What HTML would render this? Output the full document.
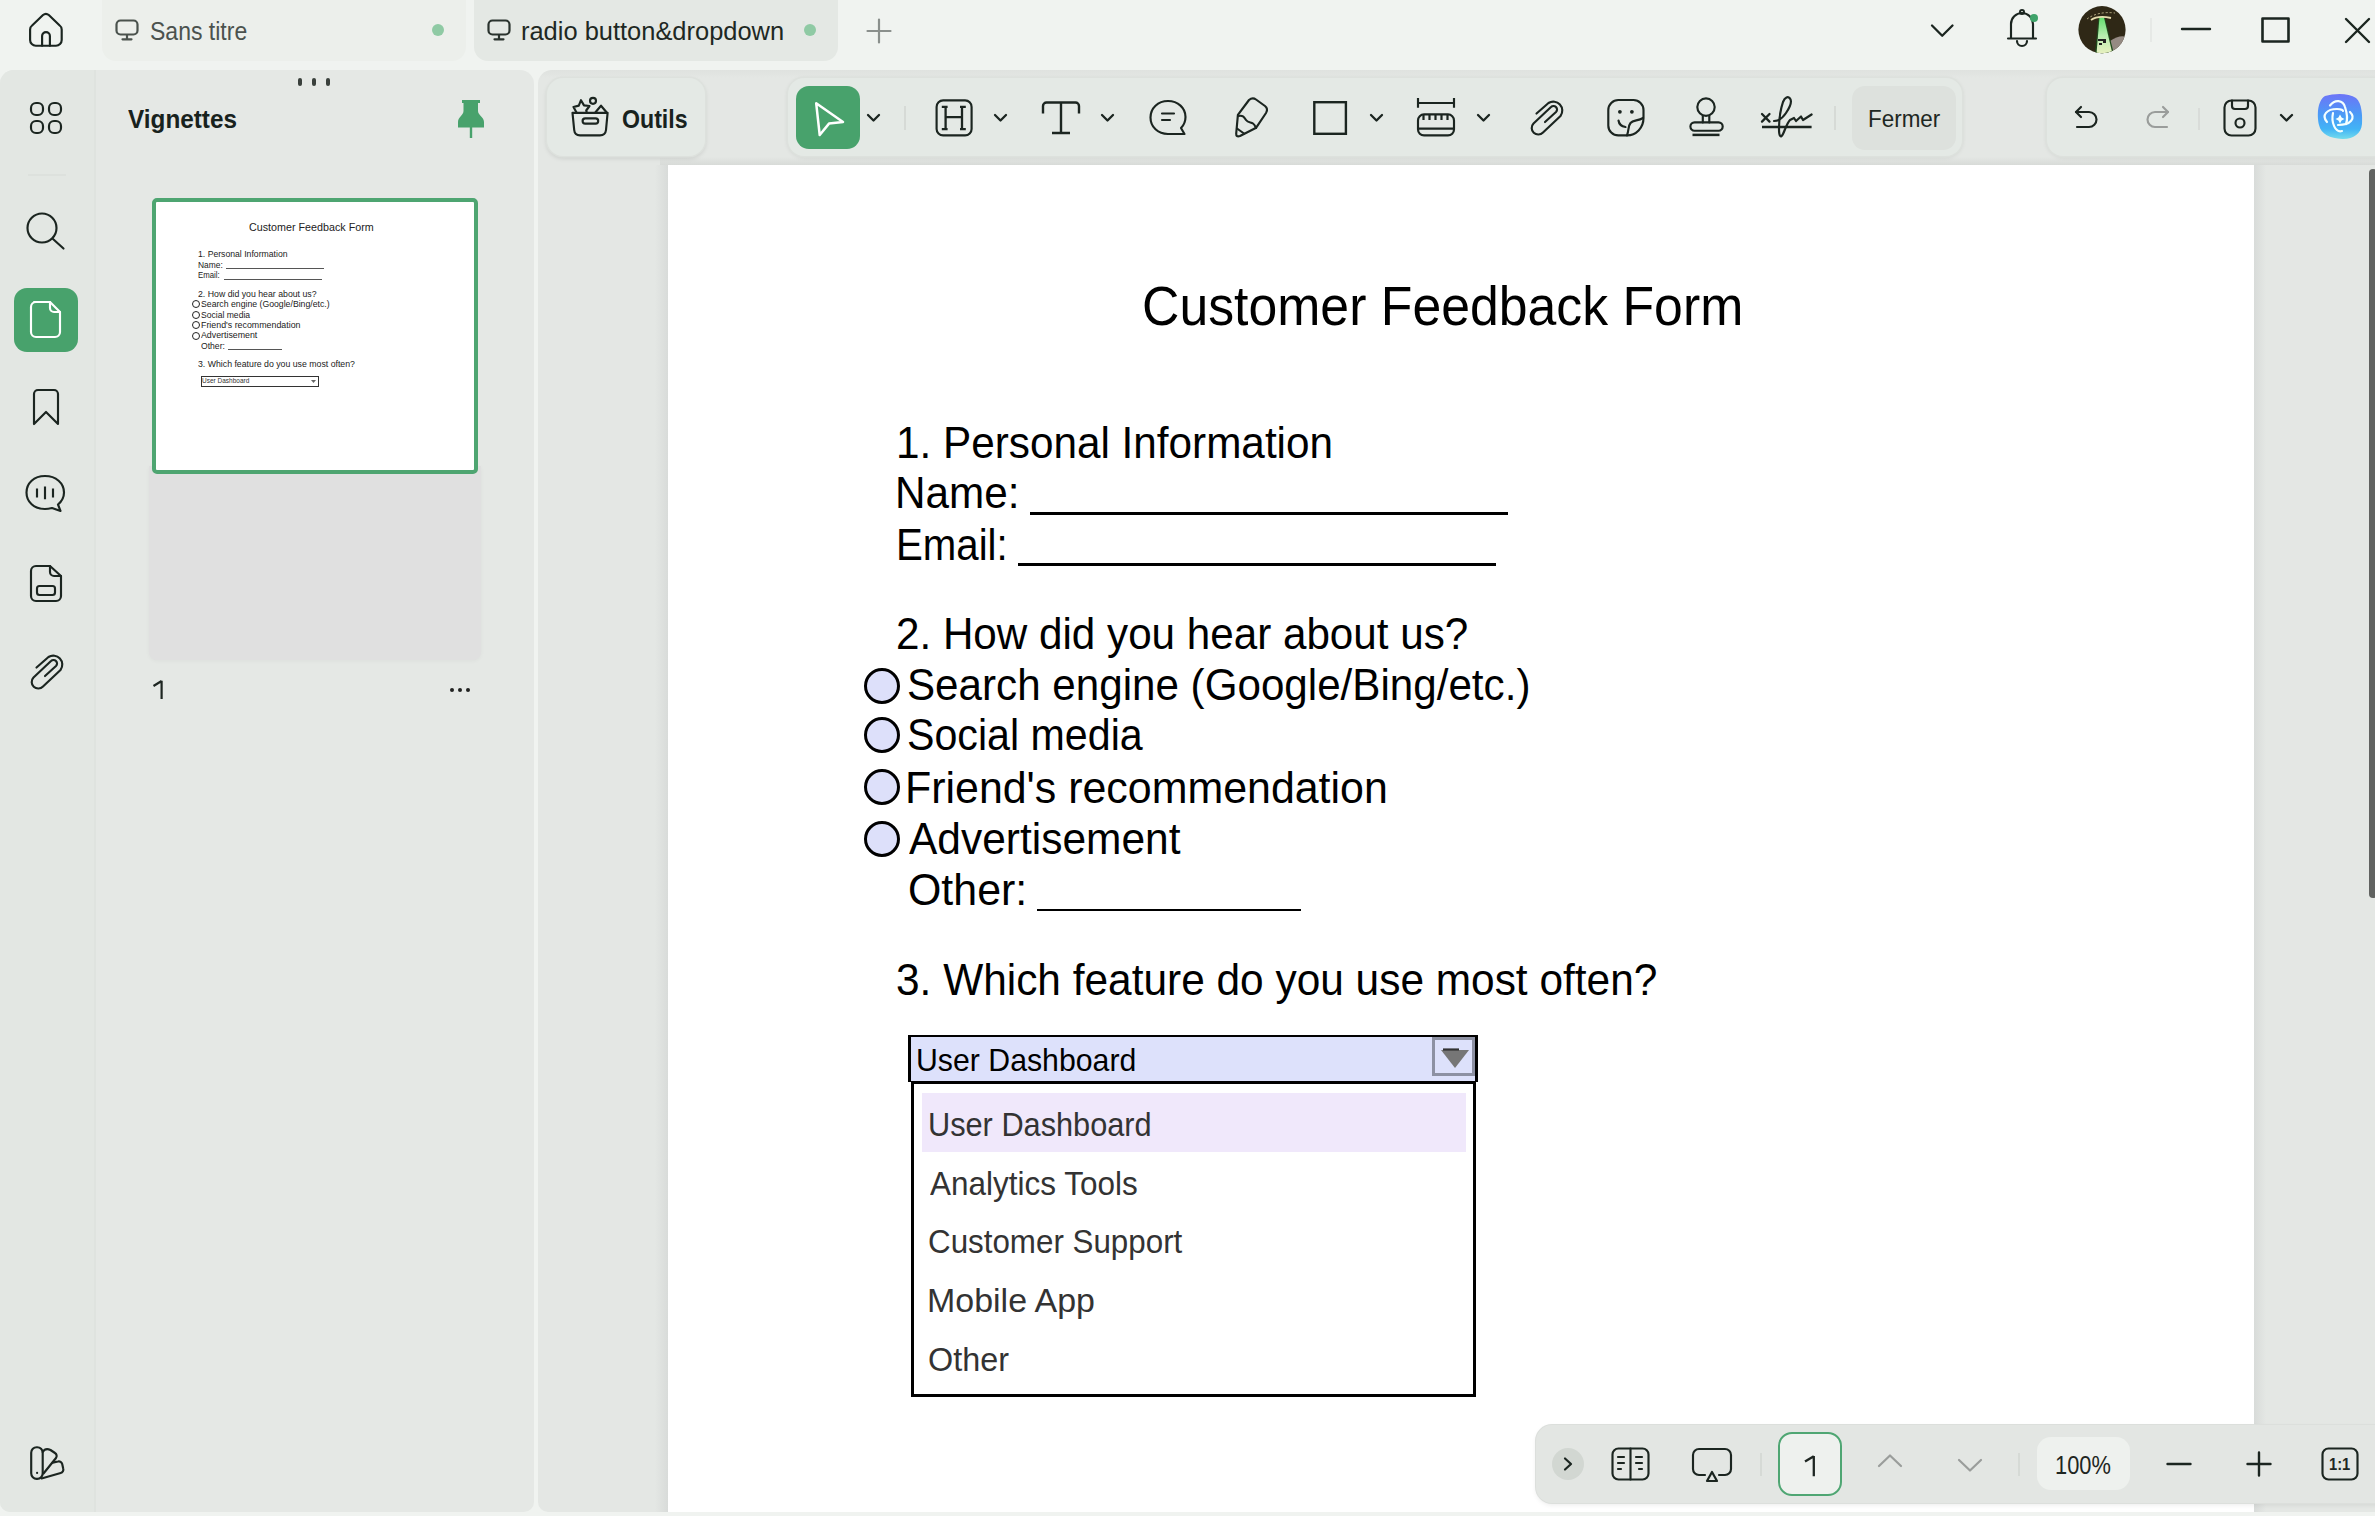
<!DOCTYPE html>
<html><head><meta charset="utf-8"><style>
html,body{margin:0;padding:0;}
body{width:2375px;height:1516px;overflow:hidden;position:relative;background:#f0f3f0;font-family:"Liberation Sans",sans-serif;}
.t{position:absolute;white-space:pre;line-height:1;transform-origin:0 0;}
.b{position:absolute;}
.i{position:absolute;overflow:visible;}
</style></head><body>
<svg class="i" style="left:26px;top:10px;" width="40" height="40" viewBox="0 0 40 40" fill="none" stroke="#1b2520" stroke-width="2.15" stroke-linecap="round" stroke-linejoin="round"><path d="M4.1 19.5 a5 5 0 0 1 2 -4 L17 5 a4.5 4.5 0 0 1 5.8 0 L33.7 15.5 a5 5 0 0 1 2 4 V30 a5.7 5.7 0 0 1 -5.7 5.7 H9.8 a5.7 5.7 0 0 1 -5.7 -5.7 Z"/><path d="M16.1 35.7 V26 a3.9 3.9 0 0 1 7.8 0 V35.7"/></svg><div class="b" style="left:102px;top:-20px;width:364px;height:81px;background:#ecefeb;border-radius:14px;"></div><div class="b" style="left:474px;top:-20px;width:364px;height:81px;background:#e4e8e4;border-radius:14px;"></div><svg class="i" style="left:115px;top:19px;" width="24" height="22" viewBox="0 0 24 22" fill="none" stroke="#1b2520" stroke-width="2.15" stroke-linecap="round" stroke-linejoin="round"><rect x="1.5" y="1.5" width="21" height="14" rx="4" stroke="#4a524d" stroke-width="2.2"/><path d="M12 16 V20 M7.5 20.3 H16.5" stroke="#4a524d" stroke-width="2.2"/></svg><div class="t" style="left:149.66px;top:18.62px;font-size:25.73px;color:#4b524e;font-weight:400;transform:scaleX(0.8949);">Sans titre</div><div class="b" style="left:432px;top:24px;width:12px;height:12px;background:#8fcaa4;border-radius:50%;"></div><svg class="i" style="left:487px;top:19px;" width="24" height="22" viewBox="0 0 24 22" fill="none" stroke="#1b2520" stroke-width="2.15" stroke-linecap="round" stroke-linejoin="round"><rect x="1.5" y="1.5" width="21" height="14" rx="4" stroke="#2a332e" stroke-width="2.2"/><path d="M12 16 V20 M7.5 20.3 H16.5" stroke="#2a332e" stroke-width="2.2"/></svg><div class="t" style="left:521.32px;top:18.91px;font-size:25.50px;color:#1e2823;font-weight:400;transform:scaleX(0.9978);">radio button&amp;dropdown</div><div class="b" style="left:804px;top:24px;width:12px;height:12px;background:#8fcaa4;border-radius:50%;"></div><svg class="i" style="left:866px;top:18px;" width="26" height="26" viewBox="0 0 26 26" fill="none" stroke="#1b2520" stroke-width="2.15" stroke-linecap="round" stroke-linejoin="round"><path d="M13 1.5 V24.5 M1.5 13 H24.5" stroke="#8a8f8c" stroke-width="2.2"/></svg><svg class="i" style="left:1929px;top:22px;" width="26" height="16" viewBox="0 0 26 16" fill="none" stroke="#1b2520" stroke-width="2.15" stroke-linecap="round" stroke-linejoin="round"><path d="M3 3.5 L13.2 13.8 L23.5 3.5" stroke-width="2.3"/></svg><svg class="i" style="left:2005px;top:8px;" width="36" height="42" viewBox="0 0 36 42" fill="none" stroke="#1b2520" stroke-width="2.15" stroke-linecap="round" stroke-linejoin="round"><path d="M6 30 V16 a11 11 0 0 1 22 0 V30"/><path d="M3 30.5 H31" /><path d="M12 33 a5 5 0 0 0 10 0"/><circle cx="17" cy="4" r="2" stroke-width="2"/></svg><div class="b" style="left:2030px;top:14px;width:8px;height:8px;background:#3fa36a;border-radius:50%;"></div><svg class="i" style="left:2078px;top:6px" width="48" height="48" viewBox="0 0 48 48"><defs><clipPath id="av"><circle cx="24" cy="23.7" r="23.6"/></clipPath><linearGradient id="bm" x1="0" y1="0" x2="0" y2="1"><stop offset="0" stop-color="#5fdc6a"/><stop offset="0.5" stop-color="#b6ecae"/><stop offset="1" stop-color="#e9f0c0"/></linearGradient></defs><g clip-path="url(#av)"><rect width="48" height="48" fill="#2f2816"/><path d="M32 35 C38 31 44 29 48 31 V48 H35 Z" fill="#958a83"/><path d="M20.5 10.5 L26.5 10.5 L36 48 L17 48 Z" fill="#1f4a1c"/><path d="M21.5 10.8 L25.8 10.8 L34.5 48 L18.5 48 Z" fill="url(#bm)"/><path d="M13 14 Q20 9 33 12" stroke="#e6dcae" stroke-width="1.8" fill="none"/><path d="M9 13 Q20 5 37 7" stroke="#bdb38a" stroke-width="1" stroke-dasharray="2 2" fill="none"/><path d="M20 34 h8 M21 38 h3 M25 36 h3" stroke="#222" stroke-width="2"/></g></svg><div class="b" style="left:2150px;top:18px;width:2px;height:24px;background:#e6e9e6;"></div><svg class="i" style="left:2180px;top:26px;" width="32" height="6" viewBox="0 0 32 6" fill="none" stroke="#1b2520" stroke-width="2.15" stroke-linecap="round" stroke-linejoin="round"><path d="M2 3 H30" stroke-width="2.4"/></svg><svg class="i" style="left:2260px;top:16px;" width="32" height="28" viewBox="0 0 32 28" fill="none" stroke="#1b2520" stroke-width="2.15" stroke-linecap="round" stroke-linejoin="round"><rect x="2.5" y="2.5" width="26" height="23" stroke-width="2.6"/></svg><svg class="i" style="left:2343px;top:16px;" width="30" height="30" viewBox="0 0 30 30" fill="none" stroke="#1b2520" stroke-width="2.15" stroke-linecap="round" stroke-linejoin="round"><path d="M3 3 L26 26 M26 3 L3 26" stroke-width="2.4"/></svg><div class="b" style="left:0px;top:70px;width:534px;height:1442px;background:#e5e8e5;border-radius:14px 14px 10px 10px;"></div><div class="b" style="left:0px;top:70px;width:95px;height:1442px;background:#e3e7e3;border-radius:14px 0 0 10px;"></div><div class="b" style="left:94px;top:70px;width:2px;height:1442px;background:#dfe3df;"></div><div class="b" style="left:298.2px;top:78px;width:3.6000000000000227px;height:8px;background:#3a403c;border-radius:2px;"></div><div class="b" style="left:312.2px;top:78px;width:3.6000000000000227px;height:8px;background:#3a403c;border-radius:2px;"></div><div class="b" style="left:326.2px;top:78px;width:3.6000000000000227px;height:8px;background:#3a403c;border-radius:2px;"></div><div class="t" style="left:128.15px;top:107.34px;font-size:25.00px;color:#18221d;font-weight:700;transform:scaleX(0.9727);">Vignettes</div><svg class="i" style="left:454px;top:98px;" width="34" height="42" viewBox="0 0 34 42" fill="none" stroke="#1b2520" stroke-width="2.15" stroke-linecap="round" stroke-linejoin="round"><path d="M8 2 H26 V5 H24 V13 C24 17 30 19 30 24 V29.6 H4 V24 C4 19 9.5 17 9.5 13 V5 H8 Z" fill="#48a26c" stroke="none"/><path d="M17 29 V40" stroke="#48a26c" stroke-width="2.4" stroke-linecap="butt"/></svg><svg class="i" style="left:28px;top:100px;" width="36" height="36" viewBox="0 0 36 36" fill="none" stroke="#1b2520" stroke-width="2.15" stroke-linecap="round" stroke-linejoin="round"><rect x="3" y="3" width="12" height="12" rx="5"/><rect x="21" y="3" width="12" height="12" rx="5"/><rect x="3" y="21" width="12" height="12" rx="5"/><rect x="21" y="21" width="12" height="12" rx="5"/></svg><div class="b" style="left:28px;top:174px;width:38px;height:2px;background:#dde1dd;"></div><svg class="i" style="left:25px;top:211px;" width="42" height="40" viewBox="0 0 42 40" fill="none" stroke="#1b2520" stroke-width="2.15" stroke-linecap="round" stroke-linejoin="round"><circle cx="17" cy="17" r="14.5"/><path d="M28 28 L38.5 37.5"/></svg><div class="b" style="left:14px;top:288px;width:64px;height:64px;background:#48a26c;border-radius:13px;"></div><svg class="i" style="left:28px;top:300px;" width="36" height="40" viewBox="0 0 36 40" fill="none" stroke="#1b2520" stroke-width="2.15" stroke-linecap="round" stroke-linejoin="round"><path d="M6 2 H22 L32 12 V32 a5 5 0 0 1 -5 5 H8 a5 5 0 0 1 -5 -5 V7 a5 5 0 0 1 5 -5 Z" stroke="#fff"/><path d="M22 2 V8 a4 4 0 0 0 4 4 H32" stroke="#fff"/></svg><svg class="i" style="left:29px;top:388px;" width="34" height="40" viewBox="0 0 34 40" fill="none" stroke="#1b2520" stroke-width="2.15" stroke-linecap="round" stroke-linejoin="round"><path d="M5 6 a4 4 0 0 1 4 -4 H25 a4 4 0 0 1 4 4 V36 L17 24 L5 36 Z"/></svg><svg class="i" style="left:23px;top:473px;" width="44" height="42" viewBox="0 0 44 42" fill="none" stroke="#1b2520" stroke-width="2.15" stroke-linecap="round" stroke-linejoin="round"><path d="M22 3 C33 3 41 10 41 19.5 C41 25 38 29 35 31.5 L37.5 38 L29 35 C27 35.5 24.5 36 22 36 C11 36 3.5 29 3.5 19.5 C3.5 10 11 3 22 3 Z"/><path d="M14 15.4 V24.5 M22 13.6 V26.3 M30 15.4 V24.5" stroke-linecap="butt"/></svg><svg class="i" style="left:28px;top:564px;" width="36" height="40" viewBox="0 0 36 40" fill="none" stroke="#1b2520" stroke-width="2.15" stroke-linecap="round" stroke-linejoin="round"><path d="M8 2 H22 L33 12 V32 a5 5 0 0 1 -5 5 H8 a5 5 0 0 1 -5 -5 V7 a5 5 0 0 1 5 -5 Z"/><path d="M22 2 V8 a4 4 0 0 0 4 4 H33"/><rect x="9" y="22" width="18" height="9" rx="2.5"/></svg><svg class="i" style="left:20px;top:640px;" width="56" height="60" viewBox="0 0 56 60" fill="none" stroke="#1b2520" stroke-width="2.15" stroke-linecap="round" stroke-linejoin="round"><path d="M16.5 27.5 L28.5 17 A9 9 0 0 1 40.5 30 L23 46.5 A6.5 6.5 0 0 1 13.5 37.5 L31 21 A3.5 3.5 0 0 1 36 26 L25 36"/></svg><svg class="i" style="left:20px;top:1436px;" width="56" height="54" viewBox="0 0 56 54" fill="none" stroke="#1b2520" stroke-width="2.15" stroke-linecap="round" stroke-linejoin="round"><rect x="11.2" y="11.2" width="11.5" height="31.6" rx="5.5"/><path d="M22.7 16 C24.5 13 27.5 12.5 30.5 14 L35 17 a3.5 3.5 0 0 1 1 5 L23.5 37.5"/><path d="M32.7 26.6 L38 25.5 a3.5 3.5 0 0 1 4.2 2.6 L43.2 32.5 a3.5 3.5 0 0 1 -2.5 4.5 L21.5 42.5"/><circle cx="17.1" cy="36.9" r="1.1" fill="#1b2520" stroke="none"/></svg><div class="b" style="left:149px;top:466px;width:332px;height:194px;background:#e0e0e0;border-radius:0 0 8px 8px;box-shadow:0 1px 4px rgba(0,0,0,0.04);"></div><div class="b" style="left:152px;top:198px;width:326px;height:276px;background:#fff;border:4px solid #4ea571;border-radius:5px;box-sizing:border-box;"></div><svg class="i" style="left:150px;top:678px;" width="18" height="24" viewBox="0 0 18 24" fill="none" stroke="#1b2520" stroke-width="2.15" stroke-linecap="round" stroke-linejoin="round"><path d="M11.6 2.8 V21 M11.6 3 L3.5 8" stroke="#1e2622" stroke-width="2.2" stroke-linecap="butt"/></svg><div class="b" style="left:450px;top:688px;width:4px;height:4px;background:#222;border-radius:50%;"></div><div class="b" style="left:458px;top:688px;width:4px;height:4px;background:#222;border-radius:50%;"></div><div class="b" style="left:466px;top:688px;width:4px;height:4px;background:#222;border-radius:50%;"></div><div class="b" style="left:538px;top:70px;width:1837px;height:1442px;background:linear-gradient(to bottom,#dfe2df 0px,#e4e7e4 8px,#e4e7e4 100%);border-radius:14px 0 0 10px;"></div><div class="b" style="left:655px;top:165px;width:13px;height:1347px;background:linear-gradient(to right,#e4e7e4,#d8dbd9);"></div><div class="b" style="left:2254px;top:165px;width:12px;height:1347px;background:linear-gradient(to right,#d8dbd9,#e4e7e4);"></div><div class="b" style="left:668px;top:165px;width:1586px;height:1347px;background:#fff;"></div><div class="b" style="left:660px;top:157px;width:1715px;height:8px;background:linear-gradient(to bottom,#e4e7e4,#d8dbd8);"></div><div class="b" style="left:2369px;top:169px;width:8px;height:729px;background:#616361;border-radius:4px;"></div><div class="b" style="left:547px;top:78px;width:158px;height:78px;background:#e4e9e5;border-radius:16px;box-shadow:0 0 0 1.5px #dde1dd, 0 2px 5px rgba(0,0,0,0.13);"></div><svg class="i" style="left:569px;top:95px;" width="42" height="44" viewBox="0 0 42 44" fill="none" stroke="#1b2520" stroke-width="2.15" stroke-linecap="round" stroke-linejoin="round"><path d="M3.5 17.8 H38.6 L37 35 Q36.4 40.3 31 40.3 H11 Q5.7 40.3 5.2 35 Z"/><rect x="13.6" y="23.4" width="15.6" height="5.2" rx="2.6"/><path d="M7.5 17.5 L4.5 12 L9.8 10.6 L12 5.2 L15 10.4 L20.5 11 L17.2 15.5 L17.8 17.5"/><circle cx="24" cy="5.8" r="3"/><path d="M26.5 17.3 L32 10.7 L37.5 17.3"/></svg><div class="t" style="left:621.55px;top:106.64px;font-size:25.00px;color:#18221d;font-weight:700;transform:scaleX(0.9259);">Outils</div><div class="b" style="left:788px;top:78px;width:1174px;height:78px;background:#e4e9e5;border-radius:16px;box-shadow:0 0 0 1.5px #dde1dd, 0 1px 5px rgba(0,0,0,0.10);"></div><div class="b" style="left:796px;top:86px;width:64px;height:63px;background:#48a26c;border-radius:13px;"></div><svg class="i" style="left:810px;top:98px;" width="40" height="42" viewBox="0 0 40 42" fill="none" stroke="#1b2520" stroke-width="2.15" stroke-linecap="round" stroke-linejoin="round"><path d="M6.2 5.3 L33 24 L19 25.6 L9.7 37 Z" stroke="#fff" stroke-width="2.5"/></svg><svg class="i" style="left:866px;top:112px;" width="16" height="12" viewBox="0 0 16 12" fill="none" stroke="#1b2520" stroke-width="2.15" stroke-linecap="round" stroke-linejoin="round"><path d="M2 3 L7.5 8.5 L13 3" stroke-width="2.3"/></svg><div class="b" style="left:904px;top:106px;width:2px;height:24px;background:#d6dad6;"></div><svg class="i" style="left:934px;top:98px;" width="40" height="40" viewBox="0 0 40 40" fill="none" stroke="#1b2520" stroke-width="2.15" stroke-linecap="round" stroke-linejoin="round"><rect x="2.6" y="2.4" width="35" height="35" rx="6.5"/><path d="M7.8 8.8 H13.6 M11.6 8.8 V31.2 M7.8 31.2 H13.6 M26 8.8 H31.8 M28 8.8 V31.2 M26 31.2 H31.8 M11.6 19.2 H28" stroke-width="2.3" stroke-linecap="butt"/></svg><svg class="i" style="left:993px;top:112px;" width="16" height="12" viewBox="0 0 16 12" fill="none" stroke="#1b2520" stroke-width="2.15" stroke-linecap="round" stroke-linejoin="round"><path d="M2 3 L7.5 8.5 L13 3" stroke-width="2.3"/></svg><svg class="i" style="left:1040px;top:100px;" width="42" height="36" viewBox="0 0 42 36" fill="none" stroke="#1b2520" stroke-width="2.15" stroke-linecap="round" stroke-linejoin="round"><path d="M3 13.6 V6 a3.5 3.5 0 0 1 3.5 -3.5 H35.5 a3.5 3.5 0 0 1 3.5 3.5 V13.6 M21 2.6 V33 M12 33 H30" stroke-width="2.4" stroke-linecap="butt"/></svg><svg class="i" style="left:1100px;top:112px;" width="16" height="12" viewBox="0 0 16 12" fill="none" stroke="#1b2520" stroke-width="2.15" stroke-linecap="round" stroke-linejoin="round"><path d="M2 3 L7.5 8.5 L13 3" stroke-width="2.3"/></svg><svg class="i" style="left:1148px;top:98px;" width="42" height="40" viewBox="0 0 42 40" fill="none" stroke="#1b2520" stroke-width="2.15" stroke-linecap="round" stroke-linejoin="round"><path d="M20 3 C30 3 37.5 10 37.5 19 C37.5 24 35.5 27.5 33 30 L36.5 36 H20 C10 36 2.5 29 2.5 19.5 C2.5 10 10 3 20 3 Z"/><path d="M14 15.5 H26 M14 22 H22"/></svg><svg class="i" style="left:1232px;top:96px;" width="40" height="44" viewBox="0 0 40 44" fill="none" stroke="#1b2520" stroke-width="2.15" stroke-linecap="round" stroke-linejoin="round"><path d="M5.9 18.8 L17 4 Q20.5 1 24 3.5 L33 10 Q36.5 13 34 17 L24.2 31.7 L8 40 Q4 41.5 4.2 37.5 Z"/><path d="M6.5 20 C11 19 12 21 14 24 C16 27 19 26 21 27.5 C23 29 23.5 31 24 32"/><path d="M5 32.5 L12 37.5"/></svg><svg class="i" style="left:1312px;top:100px;" width="36" height="36" viewBox="0 0 36 36" fill="none" stroke="#1b2520" stroke-width="2.15" stroke-linecap="round" stroke-linejoin="round"><rect x="2.3" y="2.2" width="31.6" height="31.6" stroke-width="2.4" stroke-linejoin="miter"/></svg><svg class="i" style="left:1369px;top:112px;" width="16" height="12" viewBox="0 0 16 12" fill="none" stroke="#1b2520" stroke-width="2.15" stroke-linecap="round" stroke-linejoin="round"><path d="M2 3 L7.5 8.5 L13 3" stroke-width="2.3"/></svg><svg class="i" style="left:1416px;top:96px;" width="42" height="44" viewBox="0 0 42 44" fill="none" stroke="#1b2520" stroke-width="2.15" stroke-linecap="round" stroke-linejoin="round"><path d="M2 2 V11.7 M38 2 V11.7 M2 7 H38" stroke-linecap="butt"/><rect x="2" y="18.4" width="36" height="21" rx="6"/><path d="M7.5 19 V24 M13.5 19 V24 M19.5 19 V24 M25.5 19 V24 M31.5 19 V24 M2 32.7 H38" stroke-width="2.2" stroke-linecap="butt"/></svg><svg class="i" style="left:1476px;top:112px;" width="16" height="12" viewBox="0 0 16 12" fill="none" stroke="#1b2520" stroke-width="2.15" stroke-linecap="round" stroke-linejoin="round"><path d="M2 3 L7.5 8.5 L13 3" stroke-width="2.3"/></svg><svg class="i" style="left:1519.5px;top:86px;" width="56" height="60" viewBox="0 0 56 60" fill="none" stroke="#1b2520" stroke-width="2.15" stroke-linecap="round" stroke-linejoin="round"><path d="M16.5 27.5 L28.5 17 A9 9 0 0 1 40.5 30 L23 46.5 A6.5 6.5 0 0 1 13.5 37.5 L31 21 A3.5 3.5 0 0 1 36 26 L25 36"/></svg><svg class="i" style="left:1604px;top:96px;" width="44" height="44" viewBox="0 0 44 44" fill="none" stroke="#1b2520" stroke-width="2.15" stroke-linecap="round" stroke-linejoin="round"><path d="M39.5 22 V14 a10 10 0 0 0 -10 -10 H14.3 a10 10 0 0 0 -10 10 V29.4 a10 10 0 0 0 10 10 H23 C32 39.4 39.5 32 39.5 22 Z"/><path d="M39 22 C34 25 29 24 26.5 27 C24 30 25 34 23 39.4"/><path d="M14.5 24.5 C15 28 18 30.5 21.5 31"/><circle cx="15.9" cy="15.8" r="1.9" fill="#1b2520" stroke="none"/><circle cx="27.9" cy="15.8" r="1.9" fill="#1b2520" stroke="none"/></svg><svg class="i" style="left:1687px;top:96px;" width="40" height="44" viewBox="0 0 40 44" fill="none" stroke="#1b2520" stroke-width="2.15" stroke-linecap="round" stroke-linejoin="round"><circle cx="19" cy="11.1" r="8.7"/><path d="M15.8 19.8 V26.4 M22.3 19.8 V26.4"/><rect x="3.4" y="26.4" width="32.3" height="8.3" rx="4.15"/><path d="M5.5 38.9 H32.5" stroke-linecap="butt" stroke-width="2.5"/></svg><svg class="i" style="left:1759px;top:95px;" width="56" height="46" viewBox="0 0 56 46" fill="none" stroke="#1b2520" stroke-width="2.15" stroke-linecap="round" stroke-linejoin="round"><path d="M3 19 L10.5 26.6 M10.5 19 L3 26.6" stroke-width="2.3"/><path d="M3 32 H52.6" stroke-width="2.5" stroke-linecap="butt"/><path d="M15 26 C19 26 23 24 27 18 C31 12 33 6 31 3.5 C29 1 26 2 24 7 C22 13 20 25 20 34 C20 42 22 43 24 39 C26 35 28 28 31 25 L35 23 L37 26 L42 21.5 L44 25 L52.6 19.5" stroke-width="2.2"/></svg><div class="b" style="left:1834px;top:106px;width:2px;height:24px;background:#d6dad6;"></div><div class="b" style="left:1852px;top:86px;width:104px;height:64px;background:#dde1dd;border-radius:13px;"></div><div class="t" style="left:1867.66px;top:107.31px;font-size:24.20px;color:#1e2823;font-weight:400;transform:scaleX(0.9272);">Fermer</div><div class="b" style="left:2047px;top:78px;width:343px;height:78px;background:#e4e9e5;border-radius:16px;box-shadow:0 0 0 1.5px #dde1dd, 0 1px 5px rgba(0,0,0,0.10);"></div><svg class="i" style="left:2073px;top:103px;" width="28" height="28" viewBox="0 0 28 28" fill="none" stroke="#1b2520" stroke-width="2.15" stroke-linecap="round" stroke-linejoin="round"><path d="M8 4 L3 9 L8 14"/><path d="M3 9 H16 a7.5 7.5 0 0 1 0 15 H4"/></svg><svg class="i" style="left:2143px;top:103px;" width="28" height="28" viewBox="0 0 28 28" fill="none" stroke="#1b2520" stroke-width="2.15" stroke-linecap="round" stroke-linejoin="round"><path d="M20 4 L25 9 L20 14" stroke="#9a9d9b"/><path d="M25 9 H12 a7.5 7.5 0 0 0 0 15 H24" stroke="#9a9d9b"/></svg><div class="b" style="left:2198px;top:108px;width:2px;height:22px;background:#d9dcd9;"></div><svg class="i" style="left:2222px;top:98px;" width="36" height="40" viewBox="0 0 36 40" fill="none" stroke="#1b2520" stroke-width="2.15" stroke-linecap="round" stroke-linejoin="round"><rect x="2.5" y="2.5" width="31" height="35" rx="7"/><path d="M10 2.5 V8 a3 3 0 0 0 3 3 H23 a3 3 0 0 0 3 -3 V2.5"/><circle cx="18" cy="25" r="4.5"/></svg><svg class="i" style="left:2279px;top:112px;" width="16" height="12" viewBox="0 0 16 12" fill="none" stroke="#1b2520" stroke-width="2.15" stroke-linecap="round" stroke-linejoin="round"><path d="M2 3 L7.5 8.5 L13 3" stroke-width="2.3"/></svg><svg class="i" style="left:2315px;top:92px" width="50" height="50" viewBox="0 0 50 50"><defs><linearGradient id="ai" x1="0" y1="0" x2="0" y2="1"><stop offset="0" stop-color="#6d74f7"/><stop offset="0.45" stop-color="#4b9af6"/><stop offset="0.78" stop-color="#42b4f6"/><stop offset="1" stop-color="#74dcec"/></linearGradient></defs><path d="M10 4 C20 1 34 1 41 6 C47 11 47.5 24 47 32 C46 42 38 47.5 27 47 C15 46.5 6 42 4 33 C2 24 2 9 10 4 Z" fill="url(#ai)"/><g fill="none" stroke="#f4ffff" stroke-width="2.2" stroke-linecap="round"><path d="M15 13.5 C20 7 28 8 30 15 C32 21 33 27 31 32"/><path d="M12 30 C6 23 12 17 22 17 C26 17 28 18 28 19"/><path d="M18 21 C16 30 20 41 27 39"/><path d="M35 20 C41 26 36 33 23 33"/></g><path d="M25 22.5 L26.6 25.4 L29.5 27 L26.6 28.6 L25 31.5 L23.4 28.6 L20.5 27 L23.4 25.4 Z" fill="#f4ffff"/></svg>
<div class="t" style="left:248.76px;top:221.52px;font-size:11.20px;color:#222;font-weight:400;transform:scaleX(0.9604);">Customer Feedback Form</div><div class="t" style="left:198.04px;top:250.38px;font-size:9.00px;color:#222;font-weight:400;transform:scaleX(0.9620);">1. Personal Information</div><div class="t" style="left:198.01px;top:260.98px;font-size:9.00px;color:#222;font-weight:400;transform:scaleX(0.9336);">Name:</div><div class="b" style="left:226px;top:268px;width:98px;height:1px;background:#555;"></div><div class="t" style="left:198.06px;top:271.38px;font-size:9.00px;color:#222;font-weight:400;transform:scaleX(0.8655);">Email:</div><div class="b" style="left:224px;top:278.5px;width:98px;height:1.0px;background:#555;"></div><div class="t" style="left:198.26px;top:289.78px;font-size:9.00px;color:#222;font-weight:400;transform:scaleX(0.9711);">2. How did you hear about us?</div><div class="b" style="left:192px;top:300.3px;width:8px;height:8px;border:1.5px solid #222;border-radius:50%;box-sizing:border-box;"></div><div class="t" style="left:200.91px;top:300.18px;font-size:9.00px;color:#222;font-weight:400;transform:scaleX(0.9665);">Search engine (Google/Bing/etc.)</div><div class="b" style="left:192px;top:310.7px;width:8px;height:8px;border:1.5px solid #222;border-radius:50%;box-sizing:border-box;"></div><div class="t" style="left:200.91px;top:310.58px;font-size:9.00px;color:#222;font-weight:400;transform:scaleX(0.9525);">Social media</div><div class="b" style="left:192px;top:321.0px;width:8px;height:8px;border:1.5px solid #222;border-radius:50%;box-sizing:border-box;"></div><div class="t" style="left:200.57px;top:320.88px;font-size:9.00px;color:#222;font-weight:400;transform:scaleX(0.9825);">Friend's recommendation</div><div class="b" style="left:192px;top:331.5px;width:8px;height:8px;border:1.5px solid #222;border-radius:50%;box-sizing:border-box;"></div><div class="t" style="left:201.28px;top:331.38px;font-size:9.00px;color:#222;font-weight:400;transform:scaleX(0.9783);">Advertisement</div><div class="t" style="left:200.90px;top:341.88px;font-size:9.00px;color:#222;font-weight:400;transform:scaleX(0.9550);">Other:</div><div class="b" style="left:228px;top:349px;width:54px;height:1px;background:#555;"></div><div class="t" style="left:198.37px;top:360.38px;font-size:9.00px;color:#222;font-weight:400;transform:scaleX(0.9713);">3. Which feature do you use most often?</div><div class="b" style="left:201px;top:376px;width:118px;height:11px;border:1.5px solid #333;box-sizing:border-box;"></div><div class="t" style="left:202.10px;top:377.37px;font-size:7.60px;color:#333;font-weight:400;transform:scaleX(0.8551);">User Dashboard</div><svg class="i" style="left:311px;top:380px" width="5" height="4" viewBox="0 0 5 4"><path d="M0 0 H5 L2.5 3 Z" fill="#666"/></svg>
<div class="t" style="left:1142.01px;top:278.33px;font-size:55.96px;color:#000;font-weight:400;transform:scaleX(0.9252);">Customer Feedback Form</div><div class="t" style="left:895.69px;top:420.55px;font-size:44.00px;color:#000;font-weight:400;transform:scaleX(0.9607);">1. Personal Information</div><div class="t" style="left:895.44px;top:471.45px;font-size:44.00px;color:#000;font-weight:400;transform:scaleX(0.9597);">Name:</div><div class="b" style="left:1030px;top:512px;width:478px;height:2.6000000000000227px;background:#000;"></div><div class="t" style="left:895.60px;top:522.75px;font-size:44.00px;color:#000;font-weight:400;transform:scaleX(0.9140);">Email:</div><div class="b" style="left:1017.5px;top:563.1px;width:478.5px;height:2.6000000000000227px;background:#000;"></div><div class="t" style="left:895.89px;top:611.95px;font-size:44.00px;color:#000;font-weight:400;transform:scaleX(0.9588);">2. How did you hear about us?</div><div class="b" style="left:864px;top:668.0px;width:36px;height:36px;border:3px solid #000;border-radius:50%;box-sizing:border-box;background:#dde0fa;"></div><div class="t" style="left:906.80px;top:662.75px;font-size:44.00px;color:#000;font-weight:400;transform:scaleX(0.9582);">Search engine (Google/Bing/etc.)</div><div class="b" style="left:864px;top:716.5px;width:36px;height:36px;border:3px solid #000;border-radius:50%;box-sizing:border-box;background:#dde0fa;"></div><div class="t" style="left:906.85px;top:713.05px;font-size:44.00px;color:#000;font-weight:400;transform:scaleX(0.9357);">Social media</div><div class="b" style="left:864px;top:768.5px;width:36px;height:36px;border:3px solid #000;border-radius:50%;box-sizing:border-box;background:#dde0fa;"></div><div class="t" style="left:905.18px;top:765.75px;font-size:44.00px;color:#000;font-weight:400;transform:scaleX(0.9752);">Friend's recommendation</div><div class="b" style="left:864px;top:821.0px;width:36px;height:36px;border:3px solid #000;border-radius:50%;box-sizing:border-box;background:#dde0fa;"></div><div class="t" style="left:908.62px;top:817.15px;font-size:44.00px;color:#000;font-weight:400;transform:scaleX(0.9653);">Advertisement</div><div class="t" style="left:907.58px;top:868.05px;font-size:44.00px;color:#000;font-weight:400;transform:scaleX(0.9750);">Other:</div><div class="b" style="left:1036.6px;top:908.6px;width:264.9000000000001px;height:2.6000000000000227px;background:#000;"></div><div class="t" style="left:895.89px;top:957.55px;font-size:44.00px;color:#000;font-weight:400;transform:scaleX(0.9637);">3. Which feature do you use most often?</div><div class="b" style="left:908px;top:1035px;width:570px;height:47px;background:#dde1fb;border-style:solid;border-color:#000;border-width:2.5px 3px 0 3px;box-sizing:border-box;"></div><div class="b" style="left:1432px;top:1037px;width:43px;height:39px;border:3px solid #8d91a3;box-sizing:border-box;"></div><svg class="i" style="left:1439px;top:1046px" width="32" height="24" viewBox="0 0 32 24"><path d="M2 4 L30 4 L16 22 Z" fill="#767676"/><path d="M4 3.5 H20" stroke="#333" stroke-width="2.2"/></svg><div class="t" style="left:915.67px;top:1045.34px;font-size:31.50px;color:#000;font-weight:400;transform:scaleX(0.9604);">User Dashboard</div><div class="b" style="left:911px;top:1081px;width:565px;height:316px;background:#fff;border:3px solid #000;box-sizing:border-box;"></div><div class="b" style="left:922px;top:1093px;width:544px;height:59px;background:#f0e8fb;"></div><div class="t" style="left:927.63px;top:1107.94px;font-size:33.50px;color:#333;font-weight:400;transform:scaleX(0.9168);">User Dashboard</div><div class="t" style="left:929.94px;top:1167.14px;font-size:33.50px;color:#333;font-weight:400;transform:scaleX(0.9399);">Analytics Tools</div><div class="t" style="left:928.43px;top:1225.24px;font-size:33.50px;color:#333;font-weight:400;transform:scaleX(0.9354);">Customer Support</div><div class="t" style="left:927.22px;top:1284.14px;font-size:33.50px;color:#333;font-weight:400;transform:scaleX(1.0134);">Mobile App</div><div class="t" style="left:928.48px;top:1342.84px;font-size:33.50px;color:#333;font-weight:400;transform:scaleX(0.9660);">Other</div>
<div class="b" style="left:1536px;top:1425px;width:864px;height:78px;background:#e3e6e3;border-radius:16px;box-shadow:0 0 0 1px #dcdfdc, 0 2px 5px rgba(0,0,0,0.08);"></div><div class="b" style="left:1552px;top:1448px;width:32px;height:32px;background:#d2d7d2;border-radius:50%;"></div><svg class="i" style="left:1562px;top:1456px;" width="12" height="16" viewBox="0 0 12 16" fill="none" stroke="#1b2520" stroke-width="2.15" stroke-linecap="round" stroke-linejoin="round"><path d="M3 2.5 L9 8 L3 13.5" stroke-width="2.2"/></svg><svg class="i" style="left:1610px;top:1446px;" width="42" height="36" viewBox="0 0 42 36" fill="none" stroke="#1b2520" stroke-width="2.15" stroke-linecap="round" stroke-linejoin="round"><rect x="2.5" y="2.5" width="36" height="31" rx="6"/><path d="M20.5 2.5 V33.5"/><path d="M8 11 H14 M8 17 H14 M8 23 H11 M26 11 H32 M26 17 H32 M29 23 H32" stroke-width="2.2"/></svg><svg class="i" style="left:1690px;top:1446px;" width="44" height="38" viewBox="0 0 44 38" fill="none" stroke="#1b2520" stroke-width="2.15" stroke-linecap="round" stroke-linejoin="round"><path d="M15 29 H9 a6 6 0 0 1 -6 -6 V9 a6 6 0 0 1 6 -6 H35 a6 6 0 0 1 6 6 V23 a6 6 0 0 1 -6 6 H29"/><path d="M22 26 L27 35 H17 Z" stroke-width="2.2"/></svg><div class="b" style="left:1760px;top:1453px;width:2px;height:23px;background:#d6dad6;"></div><div class="b" style="left:1778px;top:1432px;width:64px;height:64px;background:#eef1ee;border:2px solid #4fa673;border-radius:14px;box-sizing:border-box;"></div><svg class="i" style="left:1801px;top:1453px;" width="18" height="26" viewBox="0 0 18 26" fill="none" stroke="#1b2520" stroke-width="2.15" stroke-linecap="round" stroke-linejoin="round"><path d="M12.8 3 V23.3 M12.8 3.2 L4 8.6" stroke="#1e2622" stroke-width="2.3" stroke-linecap="butt"/></svg><svg class="i" style="left:1876px;top:1452px;" width="28" height="18" viewBox="0 0 28 18" fill="none" stroke="#1b2520" stroke-width="2.15" stroke-linecap="round" stroke-linejoin="round"><path d="M3 14 L14 3.5 L25 14" stroke="#9a9d9b" stroke-width="2.2"/></svg><svg class="i" style="left:1956px;top:1456px;" width="28" height="18" viewBox="0 0 28 18" fill="none" stroke="#1b2520" stroke-width="2.15" stroke-linecap="round" stroke-linejoin="round"><path d="M3 4 L14 14.5 L25 4" stroke="#9a9d9b" stroke-width="2.2"/></svg><div class="b" style="left:2018px;top:1453px;width:2px;height:23px;background:#d6dad6;"></div><div class="b" style="left:2037px;top:1437px;width:93px;height:53px;background:#eef1ee;border-radius:14px;"></div><div class="t" style="left:2055.34px;top:1452.64px;font-size:25.00px;color:#1e2622;font-weight:400;transform:scaleX(0.8733);">100%</div><svg class="i" style="left:2165px;top:1460px;" width="28" height="8" viewBox="0 0 28 8" fill="none" stroke="#1b2520" stroke-width="2.15" stroke-linecap="round" stroke-linejoin="round"><path d="M2.5 4 H25.5" stroke-width="2.4"/></svg><svg class="i" style="left:2245px;top:1450px;" width="28" height="28" viewBox="0 0 28 28" fill="none" stroke="#1b2520" stroke-width="2.15" stroke-linecap="round" stroke-linejoin="round"><path d="M14 2.5 V25.5 M2.5 14 H25.5" stroke-width="2.4"/></svg><svg class="i" style="left:2320px;top:1446px;" width="40" height="36" viewBox="0 0 40 36" fill="none" stroke="#1b2520" stroke-width="2.15" stroke-linecap="round" stroke-linejoin="round"><rect x="2.5" y="2.5" width="35" height="31" rx="6"/></svg><div class="t" style="left:2329.09px;top:1457.46px;font-size:16.00px;color:#1e2622;font-weight:700;transform:scaleX(0.9218);">1:1</div>
</body></html>
